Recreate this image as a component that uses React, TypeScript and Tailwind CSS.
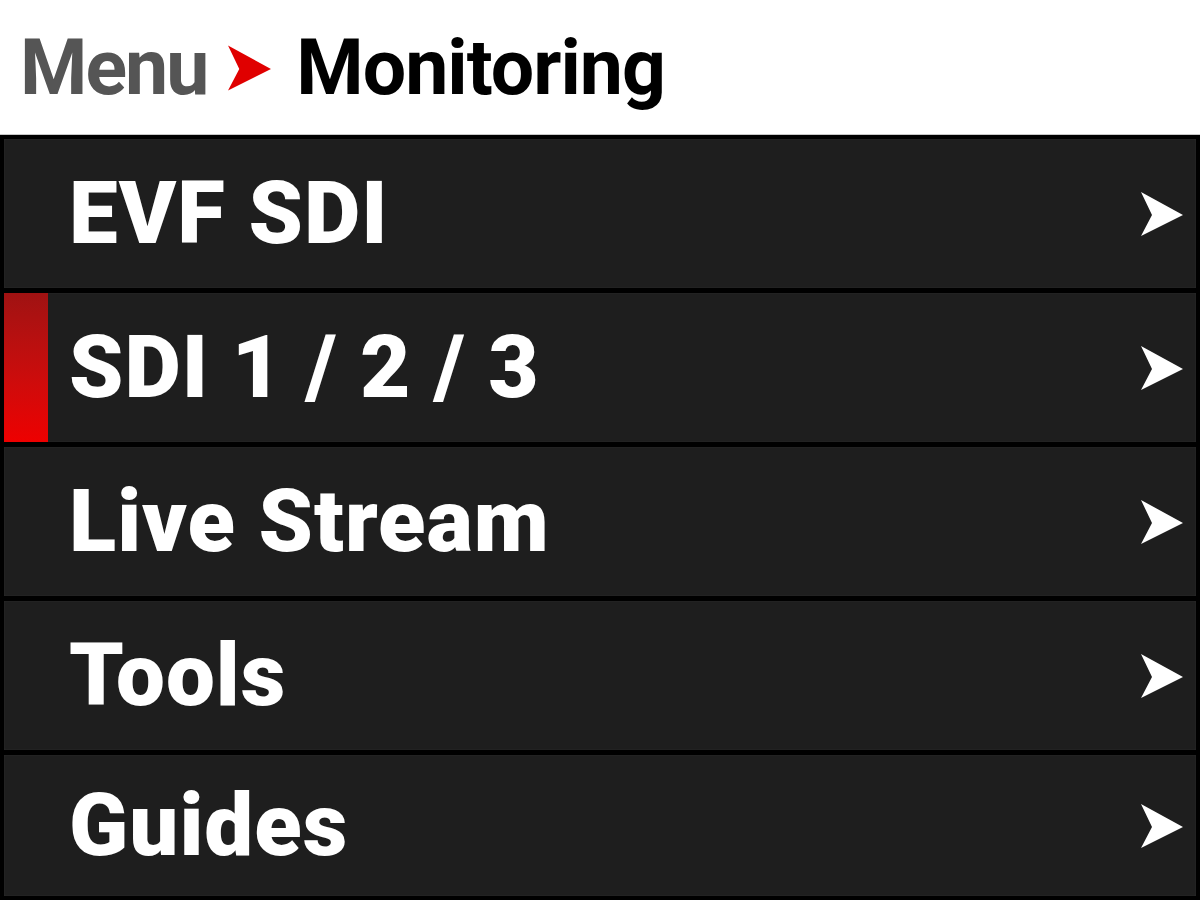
const items = [
  { label: "EVF SDI", active: false },
  { label: "SDI 1 / 2 / 3", active: true },
  { label: "Live Stream", active: false },
  { label: "Tools", active: false },
  { label: "Guides", active: false },
];

function Dart({ className }: { className?: string }) {
  return (
    <svg viewBox="0 0 44 46" className={className}>
      <path d="M1 1 L43 24 L1 45 L12 24 Z" fill="currentColor" />
    </svg>
  );
}

export default function App() {
  return (
    <div
      className="flex h-[900px] w-[1200px] flex-col overflow-hidden bg-black"
      style={{ fontFamily: "Roboto, 'Liberation Sans', sans-serif" }}
    >
      {/* Breadcrumb */}
      <div className="flex h-[135px] shrink-0 items-center border-b border-[#c8c8c8] bg-white pl-[20px] pt-[2px]">
        <span className="text-[77px] font-bold leading-none tracking-[-2px] text-[#555555]">
          Menu
        </span>
        <Dart className="ml-[20px] mr-[24px] h-[50px] w-[45px] text-[#e00000]" />
        <span className="text-[77px] font-bold leading-none tracking-[-1px] text-black">
          Monitoring
        </span>
      </div>

      {/* Menu rows */}
      <div className="flex flex-1 flex-col gap-[5px] px-[4px] pt-[4px] pb-[4px]">
        {items.map((item, i) => (
          <div
            key={item.label}
            className={`flex items-center bg-[#1e1e1e] shadow-[inset_0_0_2px_rgba(255,255,255,0.08)] ${
              i === items.length - 1 ? "flex-1" : "h-[149px] shrink-0"
            }`}
          >
            <div
              className={`h-full w-[44px] shrink-0 ${
                item.active ? "bg-gradient-to-b from-[#a01212] to-[#ee0000]" : ""
              }`}
            />
            <span className="ml-[21px] flex-1 text-[87px] font-black leading-none tracking-[1px] text-white">
              {item.label}
            </span>
            <Dart className="mr-[12px] h-[46px] w-[44px] text-white" />
          </div>
        ))}
      </div>
    </div>
  );
}
